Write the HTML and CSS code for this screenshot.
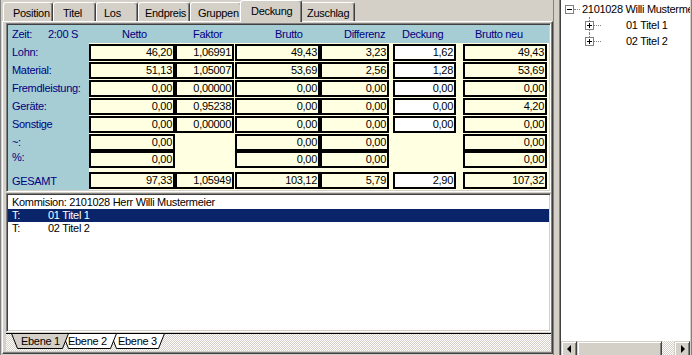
FILE: index.html
```html
<!DOCTYPE html>
<html lang="de">
<head>
    <meta charset="UTF-8">
    <title>Deckung</title>
    <link rel="stylesheet" href="styles.css">
</head>
<body>
    <div class="left">
        <div class="tabs">
            <div class="tab t-pos">Position</div>
            <div class="tab t-titel">Titel</div>
            <div class="tab t-los">Los</div>
            <div class="tab t-end">Endpreis</div>
            <div class="tab t-grp">Gruppen</div>
            <div class="tab t-deck active">Deckung</div>
            <div class="tab t-zus">Zuschlag</div>
        </div>
        <div class="page">
            <div class="calc">
                <div class="row head">
                    <div class="lbl"><span class="zeit">Zeit:</span>2:00 S</div>
                    <div class="h h-netto">Netto</div>
                    <div class="h h-faktor">Faktor</div>
                    <div class="h h-brutto">Brutto</div>
                    <div class="h h-diff">Differenz</div>
                    <div class="h h-deck">Deckung</div>
                    <div class="h h-neu">Brutto neu</div>
                </div>
                <div class="row">
                    <div class="lbl">Lohn:</div>
                    <div class="c">46,20</div>
                    <div class="c f">1,06991</div>
                    <div class="c">49,43</div>
                    <div class="c">3,23</div>
                    <div class="c d">1,62</div>
                    <div class="c">49,43</div>
                </div>
                <div class="row">
                    <div class="lbl">Material:</div>
                    <div class="c">51,13</div>
                    <div class="c f">1,05007</div>
                    <div class="c">53,69</div>
                    <div class="c">2,56</div>
                    <div class="c d">1,28</div>
                    <div class="c">53,69</div>
                </div>
                <div class="row">
                    <div class="lbl">Fremdleistung:</div>
                    <div class="c">0,00</div>
                    <div class="c f">0,00000</div>
                    <div class="c">0,00</div>
                    <div class="c">0,00</div>
                    <div class="c d">0,00</div>
                    <div class="c">0,00</div>
                </div>
                <div class="row">
                    <div class="lbl">Geräte:</div>
                    <div class="c">0,00</div>
                    <div class="c f">0,95238</div>
                    <div class="c">0,00</div>
                    <div class="c">0,00</div>
                    <div class="c d">0,00</div>
                    <div class="c">4,20</div>
                </div>
                <div class="row">
                    <div class="lbl">Sonstige</div>
                    <div class="c">0,00</div>
                    <div class="c f">0,00000</div>
                    <div class="c">0,00</div>
                    <div class="c">0,00</div>
                    <div class="c d">0,00</div>
                    <div class="c">0,00</div>
                </div>
                <div class="row">
                    <div class="lbl">~:</div>
                    <div class="c">0,00</div>
                    <div></div>
                    <div class="c">0,00</div>
                    <div class="c">0,00</div>
                    <div></div>
                    <div class="c">0,00</div>
                </div>
                <div class="row tight">
                    <div class="lbl up">%:</div>
                    <div class="c">0,00</div>
                    <div></div>
                    <div class="c">0,00</div>
                    <div class="c">0,00</div>
                    <div></div>
                    <div class="c">0,00</div>
                </div>
                <div class="row sum">
                    <div class="lbl">GESAMT</div>
                    <div class="c">97,33</div>
                    <div class="c f">1,05949</div>
                    <div class="c">103,12</div>
                    <div class="c">5,79</div>
                    <div class="c d">2,90</div>
                    <div class="c">107,32</div>
                </div>
            </div>

            <div class="list">
                <div class="item">Kommision: 2101028 Herr Willi Mustermeier</div>
                <div class="item sel"><span class="typ">T:</span>01 Titel 1</div>
                <div class="item"><span class="typ">T:</span>02 Titel 2</div>
            </div>

            <div class="tabset">
                <svg class="tabsvg" width="545" height="18" viewBox="0 0 545 18">
                    <line x1="0" y1="0.5" x2="545" y2="0.5" stroke="#000"/>
                    <polygon points="104.5,0.5 110.5,15.5 152.5,15.5 158.5,0.5" fill="#fff" stroke="#000"/>
                    <text x="112" y="12">Ebene 3</text>
                    <polygon points="56.5,0.5 62.5,15.5 104.5,15.5 110.5,0.5" fill="#fff" stroke="#000"/>
                    <text x="62" y="12">Ebene 2</text>
                    <polygon points="5.5,0.5 11.5,15.5 56.5,15.5 62.5,0.5" fill="#d4d0c8" stroke="#000"/>
                    <text x="15" y="12">Ebene 1</text>
                </svg>
            </div>
        </div>
    </div>

    <div class="splitter"></div>

    <div class="tree">
        <div class="nodes">
            <div class="node root"><span class="exp minus"></span><span class="dots"></span><span class="txt">2101028 Willi Mustermeier</span></div>
            <div class="node child"><span class="exp plus"></span><span class="dots"></span><span class="txt">01 Titel 1</span></div>
            <div class="node child last"><span class="exp plus"></span><span class="dots"></span><span class="txt">02 Titel 2</span></div>
        </div>
        <div class="hscroll">
            <div class="sbtn"><span class="arr arr-left"></span></div>
            <div class="thumb"></div>
            <div class="track"></div>
            <div class="sbtn"><span class="arr arr-right"></span></div>
        </div>
    </div>
</body>
</html>
```

FILE: styles.css
```css
html, body {
    margin: 0;
    padding: 0;
}

body {
    width: 692px;
    height: 355px;
    overflow: hidden;
    display: flex;
    background-color: #d4d0c8;
    font-family: "Liberation Sans", Arial, sans-serif;
    font-size: 11px;
    letter-spacing: -0.3px;
    color: #000;
}

/* left side: page control */

.left {
    flex: none;
    width: 551px;
    height: 355px;
    border-left: 1px solid #808080;
    border-right: 1px solid #808080;
    padding-left: 1px;
}

.tabs {
    display: flex;
    align-items: flex-end;
    height: 21px;
    padding-left: 1px;
}

.tab {
    box-sizing: border-box;
    height: 19px;
    padding-top: 3px;
    padding-left: 7px;
    line-height: 14px;
    border: 1px solid;
    border-color: #fff #404040 transparent #fff;
    border-bottom: none;
    border-radius: 3px 3px 0 0;
    box-shadow: inset -1px 0 #808080;
    white-space: nowrap;
}

.t-pos { width: 50px; padding-left: 9px; }
.t-titel { width: 43px; padding-left: 9px; }
.t-los { width: 42px; }
.t-end { width: 52px; padding-left: 6px; }
.t-grp { width: 52px; }
.t-deck { width: 58px; }
.t-zus { width: 55px; padding-left: 6px; }

.tab.active {
    position: relative;
    z-index: 1;
    height: 22px;
    margin: 0 -2px -1px;
    width: 62px;
    padding-left: 10px;
    background-color: #d4d0c8;
}

.page {
    box-sizing: border-box;
    width: 551px;
    height: 333px;
    border: 1px solid;
    border-color: #fff #404040 #404040 #fff;
    box-shadow: inset -1px -1px #808080;
    padding: 1px 1px 2px 3px;
}

/* calculation grid */

.calc {
    height: 165px;
    border: 1px solid;
    border-color: #808080 #fff #fff #808080;
    padding: 1px;
    box-shadow: inset 1px 1px #404040, inset -1px -1px #d4d0c8;
    background: linear-gradient(to right, #a6ccd4 82px, #ffffe1 82px);
}

.row {
    display: grid;
    grid-template-columns: 81px 86px 60px 85px 69px 74px 84px;
    height: 18px;
}

.row.head {
    background-color: #a6ccd4;
}

.row.tight {
    height: 17px;
}

.row.sum {
    height: 22px;
}

.lbl {
    display: flex;
    align-items: center;
    padding-left: 4px;
    color: #000080;
    white-space: nowrap;
}

.lbl.up {
    padding-bottom: 7px;
}

.sum .lbl {
    padding-top: 4px;
}

.zeit {
    display: inline-block;
    width: 36px;
}

.h {
    color: #000080;
    line-height: 18px;
    white-space: nowrap;
}

.h-netto { padding-left: 33px; }
.h-faktor { padding-left: 18px; }
.h-brutto { padding-left: 40px; }
.h-diff { padding-left: 24px; }
.h-deck { padding-left: 13px; }
.h-neu { padding-left: 12px; }

.c {
    box-sizing: border-box;
    height: 17px;
    margin-top: 1px;
    border: 2px solid #000;
    background-color: #ffffe1;
    text-align: right;
    padding-right: 1px;
    line-height: 13px;
}

.c.f {
    width: 59px;
}

.c.d {
    width: 63px;
    margin-left: 4px;
    background-color: #fff;
}

.tight .c {
    margin-top: 0;
}

.sum .c {
    margin-top: 4px;
}

/* list box */

.list {
    height: 135px;
    margin-top: 1px;
    border: 1px solid;
    border-color: #808080 #fff #fff #808080;
    padding: 1px;
    box-shadow: inset 1px 1px #404040, inset -1px -1px #d4d0c8;
    background-color: #fff;
}

.list .item:first-child {
    margin-top: 1px;
}

.item {
    height: 13px;
    line-height: 13px;
    padding-left: 4px;
    white-space: nowrap;
}

.item.sel {
    background-color: #0a246a;
    color: #fff;
}

.typ {
    display: inline-block;
    width: 36px;
}

/* bottom tab set */

.tabset {
    height: 18px;
    margin-top: 1px;
    background: repeating-conic-gradient(#fff 0 25%, #d4d0c8 0 50%) 0 0 / 2px 2px;
}

.tabsvg {
    display: block;
}

.tabsvg text {
    font-family: "Liberation Sans", Arial, sans-serif;
    font-size: 11px;
    letter-spacing: -0.3px;
    fill: #000;
}

.splitter {
    flex: none;
    width: 5px;
}

/* tree view */

.tree {
    flex: none;
    box-sizing: border-box;
    width: 133px;
    height: 357px;
    display: flex;
    flex-direction: column;
    padding: 0 1px;
    border-left: 1px solid #808080;
    border-right: 1px solid #808080;
    box-shadow: inset 1px 0 #404040, inset -1px 0 #d4d0c8;
    background-color: #fff;
    overflow: hidden;
}

.nodes {
    flex: 1;
    padding-top: 1px;
    overflow: hidden;
}

.node {
    position: relative;
    display: flex;
    align-items: center;
    height: 16px;
    white-space: nowrap;
}

.root {
    padding-left: 4px;
}

.child {
    padding-left: 24px;
}

.child::before {
    content: '';
    position: absolute;
    left: 28px;
    top: 0;
    bottom: 0;
    border-left: 1px dotted #808080;
}

.child.last::before {
    bottom: 50%;
}

.exp {
    position: relative;
    z-index: 1;
    flex: none;
    box-sizing: border-box;
    width: 9px;
    height: 9px;
    border: 1px solid #808080;
    background-color: #fff;
}

.exp::before {
    content: '';
    position: absolute;
    left: 1px;
    top: 3px;
    width: 5px;
    height: 1px;
    background-color: #000;
}

.exp.plus::after {
    content: '';
    position: absolute;
    left: 3px;
    top: 1px;
    width: 1px;
    height: 5px;
    background-color: #000;
}

.dots {
    flex: none;
    width: 6px;
    border-top: 1px dotted #808080;
}

.child .dots {
    width: 7px;
}

.root .txt {
    margin-left: 2px;
}

.child .txt {
    margin-left: 25px;
}

/* horizontal scroll bar */

.hscroll {
    display: flex;
    height: 16px;
    flex: none;
}

.sbtn, .thumb {
    box-sizing: border-box;
    height: 16px;
    background-color: #d4d0c8;
    border: 1px solid;
    border-color: #d4d0c8 #404040 #404040 #d4d0c8;
    box-shadow: inset 1px 1px #fff, inset -1px -1px #808080;
}

.sbtn {
    width: 16px;
    display: flex;
    align-items: center;
    justify-content: center;
}

.thumb {
    width: 85px;
}

.track {
    flex: 1;
    background: repeating-conic-gradient(#fff 0 25%, #d4d0c8 0 50%) 0 0 / 2px 2px;
}

.arr {
    width: 0;
    height: 0;
    border-top: 4px solid transparent;
    border-bottom: 4px solid transparent;
}

.arr-left {
    border-right: 4px solid #000;
    margin-right: 1px;
}

.arr-right {
    border-left: 4px solid #000;
    margin-left: 1px;
}
```
